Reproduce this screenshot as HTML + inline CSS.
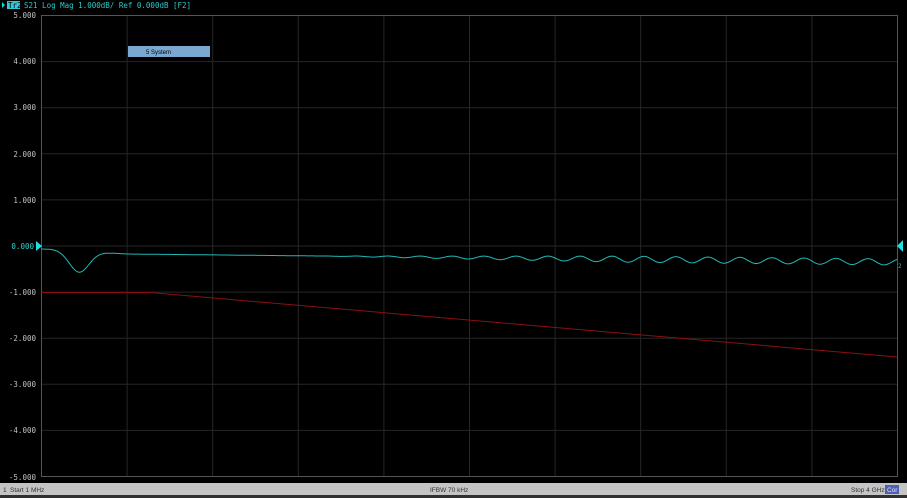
<!DOCTYPE html>
<html><head><style>
html,body{margin:0;padding:0;background:#000;width:907px;height:498px;overflow:hidden;font-family:"DejaVu Sans Mono","Liberation Mono",monospace}
</style></head><body>
<svg width="907" height="498" style="position:absolute;left:0;top:0" xmlns="http://www.w3.org/2000/svg">
<rect width="907" height="498" fill="#000"/>
<g id="grid" stroke="#262626" stroke-width="1"></g>
<rect x="41.5" y="15.5" width="856" height="461" fill="none" stroke="#555"/>
<rect x="0" y="0" width="907" height="9" fill="#000"/>
<polygon points="2,2 5,5 2,8" fill="#00e0e0"/>
<rect x="7" y="1" width="13" height="8" fill="#30c8d8"/>
<text x="8" y="8" font-size="7.5" fill="#000" font-family="DejaVu Sans Mono">Tr2</text>
<text x="24" y="8" font-size="7.5" fill="#30c8c8" font-family="DejaVu Sans Mono">S21 Log Mag 1.000dB/ Ref 0.000dB [F2]</text>
<g font-size="7.5" fill="#c0c0c0" font-family="DejaVu Sans Mono" text-anchor="end">
<text x="36" y="18">5.000</text><text x="36" y="64">4.000</text><text x="36" y="110">3.000</text>
<text x="36" y="157">2.000</text><text x="36" y="203">1.000</text><text x="34" y="249" fill="#30d0d0">0.000</text>
<text x="36" y="295">-1.000</text><text x="36" y="341">-2.000</text><text x="36" y="387">-3.000</text>
<text x="36" y="433">-4.000</text><text x="36" y="480">-5.000</text>
</g>
<rect x="128" y="46" width="82" height="11" fill="#7aa8d0"/>
<text x="146" y="54" font-size="6" fill="#000" font-family="Liberation Sans">5 System</text>
<polyline points="41,292.5 150,292.5 897,357" fill="none" stroke="#8a1010" stroke-width="1"/>
<path id="tr" fill="none" stroke="#20b8b8" stroke-width="1"/>
<polygon points="36,241 42,246 36,251" fill="#20e0e0"/>
<polygon points="903,240 897,246 903,252" fill="#20e0e0"/>
<text x="898" y="268" font-size="6" fill="#20c0c0">2</text>
<rect x="0" y="483" width="907" height="12" fill="#c4c4c4"/>
<rect x="0" y="495" width="907" height="3" fill="#303030"/>
<g font-size="6.5" fill="#303030" font-family="Liberation Sans">
<text x="3" y="492">1</text><text x="10" y="492">Start 1 MHz</text>
<text x="430" y="492">IFBW 70 kHz</text><text x="851" y="492">Stop 4 GHz</text>
</g>
<rect x="885" y="485" width="14" height="9" fill="#5060b0"/>
<text x="887" y="492" font-size="6.5" fill="#e0e0ff" font-family="Liberation Sans">Cor</text>
</svg>
<script>
var g=document.getElementById('grid'),s='';
for(var i=1;i<10;i++){var y=15.5+i*46.1;s+='<line x1="41" x2="897" y1="'+y+'" y2="'+y+'"/>';var x=41.5+i*85.6;s+='<line y1="15" y2="477" x1="'+x+'" x2="'+x+'"/>';}
g.innerHTML=s;
var d='M41,249';
for(var x=41;x<=897;x+=1){var y;
if(x<127){y=249+21*Math.exp(-Math.pow((x-79)/14,2));y+= (x-41)/86*5*(x>79?1:(x-41)/38);}
else{var p=(x-127)/770;y=254+p*8;var a=x<320?0:Math.min(3,(x-320)/100);y+=a*Math.sin((x-300)/32*2*Math.PI);}
d+=' L'+x+','+y.toFixed(1);}
document.getElementById('tr').setAttribute('d',d);
</script>
</body></html>
